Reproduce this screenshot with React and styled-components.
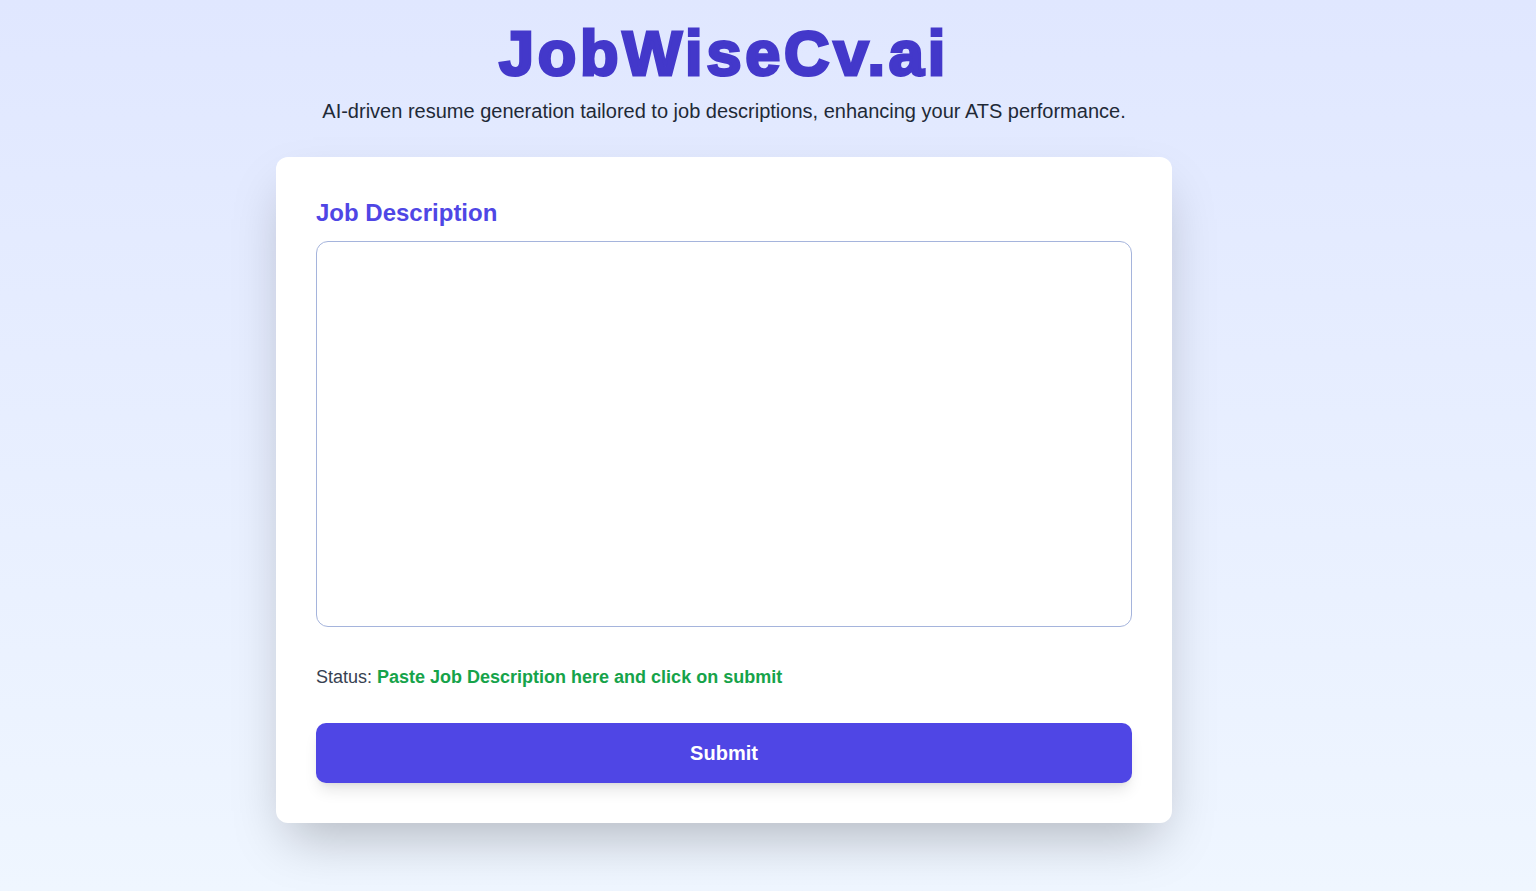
import React, { useState } from 'react';
import styled, { createGlobalStyle } from 'styled-components';

const GlobalStyle = createGlobalStyle`
  * { box-sizing: border-box; }
  body {
    margin: 0;
    font-family: "Liberation Sans", Arial, sans-serif;
  }
`;

// content sits a bit left of the viewport centre in the reference
const Page = styled.main`
  min-height: 100vh;
  background: linear-gradient(to bottom, #e0e7ff, #eff6ff);
  display: flex;
  flex-direction: column;
  align-items: center;
  padding: 17px 104px 40px 16px;
`;

const Title = styled.h1`
  margin: 0;
  font-size: 63px;
  line-height: 72px;
  font-weight: 800;
  letter-spacing: 3.8px;
  color: #4338ca;
  -webkit-text-stroke: 3px #4338ca;
`;

const Subtitle = styled.p`
  margin: 8px 0 0;
  font-size: 20px;
  line-height: 28px;
  color: #1f2937;
`;

const Card = styled.section`
  width: 896px;
  margin-top: 32px;
  background: #fff;
  border-radius: 12px;
  padding: 40px;
  box-shadow: 0 25px 50px -12px rgba(0, 0, 0, 0.25);
`;

const Label = styled.label`
  display: block;
  font-size: 24px;
  line-height: 32px;
  font-weight: 700;
  color: #4f46e5;
  margin-bottom: 12px;
`;

const TextArea = styled.textarea`
  display: block;
  width: 100%;
  height: 386px;
  resize: none;
  border: 1px solid #a5b4dc;
  border-radius: 12px;
  padding: 12px 16px;
  font-family: inherit;
  font-size: 16px;
  outline: none;
`;

const Status = styled.p`
  margin: 37px 0 0;
  font-size: 18px;
  line-height: 26px;
  color: #374151;
`;

const StatusText = styled.span`
  font-weight: 700;
  color: #16a34a;
`;

const SubmitButton = styled.button`
  display: block;
  width: 100%;
  height: 60px;
  margin-top: 33px;
  border: none;
  border-radius: 10px;
  background: #4f46e5;
  color: #fff;
  font-family: inherit;
  font-size: 20px;
  font-weight: 700;
  cursor: pointer;
  box-shadow: 0 10px 15px -3px rgba(0, 0, 0, 0.1), 0 4px 6px -4px rgba(0, 0, 0, 0.1);
`;

export default function App() {
  const [text, setText] = useState('');
  return (
    <>
      <GlobalStyle />
      <Page>
        <Title>JobWiseCv.ai</Title>
        <Subtitle>
          AI-driven resume generation tailored to job descriptions, enhancing your ATS performance.
        </Subtitle>
        <Card>
          <Label htmlFor="jd">Job Description</Label>
          <TextArea id="jd" value={text} onChange={(e) => setText(e.target.value)} />
          <Status>
            Status: <StatusText>Paste Job Description here and click on submit</StatusText>
          </Status>
          <SubmitButton>Submit</SubmitButton>
        </Card>
      </Page>
    </>
  );
}
